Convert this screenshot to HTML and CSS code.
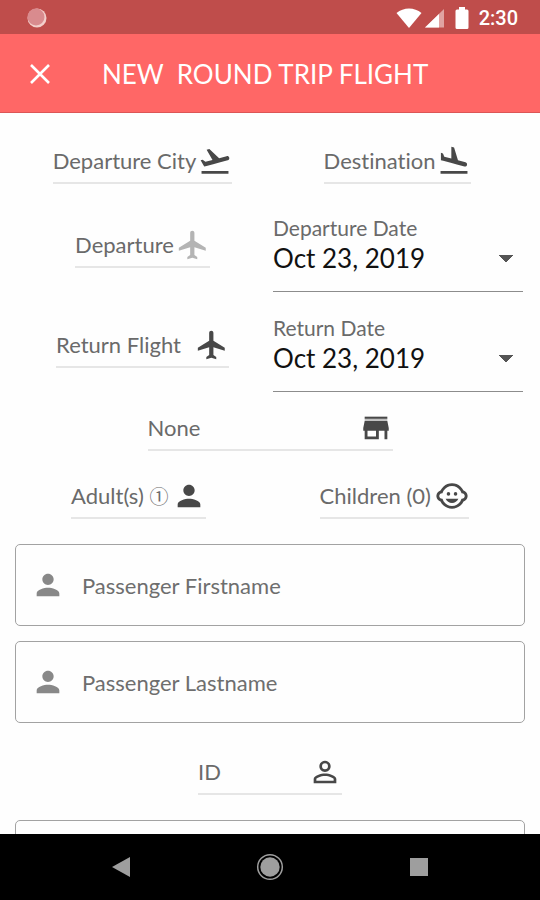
FILE: index.html
```html
<!DOCTYPE html>
<html lang="en">
<head>
<meta charset="utf-8">
<meta name="viewport" content="width=device-width, initial-scale=1">
<title>New Round Trip Flight</title>
<link rel="stylesheet" href="styles.css">
</head>
<body>
<div class="status">
  <svg class="status-dot" viewBox="0 0 20 20" aria-hidden="true"><circle cx="10" cy="10" r="9.500" fill="#f3cfcb"/><circle cx="9" cy="9" r="8.500" fill="#d98b8e"/></svg>
  <div class="status-right">
    <svg class="wifi" viewBox="0 0 26 20" aria-hidden="true"><path d="M13 20 .5 5Q6 .5 13 .5T25.500 5z" fill="#fff"/></svg>
    <svg class="signal" viewBox="0 0 20 20" aria-hidden="true"><path d="M0 19.500 19 1v18.500z" fill="#e0a3a2"/><path d="M0 19.500 14 6v13.500z" fill="#fff"/></svg>
    <svg class="battery" viewBox="0 0 14 22" aria-hidden="true"><path d="M4 0h6v2.500h2q1.500 0 1.500 1.500v16.500q0 1.500-1.500 1.500H2q-1.500 0-1.500-1.500V4q0-1.500 1.500-1.500h2z" fill="#fff"/></svg>
    <span class="time">2:30</span>
  </div>
</div>

<header class="appbar">
  <button class="close" type="button" aria-label="Close">
    <svg viewBox="0 0 20 20" aria-hidden="true"><path d="M1 1 19 19M19 1 1 19" stroke="#fff" stroke-width="2.600" fill="none"/></svg>
  </button>
  <h1>NEW&nbsp; ROUND TRIP FLIGHT</h1>
</header>

<main>
  <form class="form">
    <div class="pair">
      <button class="pick" type="button">Departure City
        <svg class="icon" viewBox="0 0 24 24" aria-hidden="true"><path d="M2.500 19h19v2h-19zM22.070 9.640c-.21-.8-1.040-1.280-1.840-1.060L14.920 10l-6.900-6.430-1.930.51 4.140 7.170-4.970 1.330-1.970-1.540-1.450.39 1.820 3.160.77 1.330 1.600-.43 5.310-1.420 4.350-1.160L21 11.490c.81-.23 1.280-1.050 1.070-1.850z"/></svg>
      </button>
      <button class="pick" type="button">Destination
        <svg class="icon" viewBox="0 0 24 24" aria-hidden="true"><path d="M2.500 19h19v2h-19zM9.680 13.270l4.350 1.160 5.310 1.420c.8.21 1.620-.26 1.840-1.060.21-.8-.26-1.620-1.060-1.840l-5.310-1.420-2.760-9.020L10.120 2v8.280L5.150 8.950l-.93-2.320-1.450-.39v5.170l1.600.43z"/></svg>
      </button>
    </div>

    <div class="pair dated">
      <button class="pick" type="button">Departure
        <svg class="icon faded" viewBox="0 0 24 24" aria-hidden="true"><path d="M21 16v-2l-8-5V3.500c0-.83-.67-1.500-1.500-1.500S10 2.670 10 3.500V9l-8 5v2l8-2.500V19l-2 1.500V22l3.500-1 3.500 1v-1.500L13 19v-5.500z"/></svg>
      </button>
      <div class="date">
        <label for="departure-date">Departure Date</label>
        <select id="departure-date"><option>Oct 23, 2019</option></select>
      </div>
    </div>

    <div class="pair dated">
      <button class="pick wide" type="button">Return Flight
        <svg class="icon" viewBox="0 0 24 24" aria-hidden="true"><path d="M21 16v-2l-8-5V3.500c0-.83-.67-1.500-1.500-1.500S10 2.670 10 3.500V9l-8 5v2l8-2.500V19l-2 1.500V22l3.500-1 3.500 1v-1.500L13 19v-5.500z"/></svg>
      </button>
      <div class="date">
        <label for="return-date">Return Date</label>
        <select id="return-date"><option>Oct 23, 2019</option></select>
      </div>
    </div>

    <button class="pick agency" type="button">None
      <svg class="icon" viewBox="0 0 24 24" aria-hidden="true"><path d="M4 4h16v1.500H4z"/><path d="M4 5.500h16V7H4z" opacity=".35"/><path d="M20 7H4l-1 5v2h1v6h10v-6h4v6h2v-6h1v-2zm-8 11H6v-4h6z"/></svg>
    </button>

    <div class="pair people">
      <button class="pick" type="button"><span>Adult(s) <span class="count">①</span></span>
        <svg class="icon" viewBox="0 0 24 24" aria-hidden="true"><path d="M12 12c2.210 0 4-1.790 4-4s-1.790-4-4-4-4 1.790-4 4 1.790 4 4 4zm0 2c-2.670 0-8 1.340-8 4v2h16v-2c0-2.660-5.330-4-8-4z"/></svg>
      </button>
      <button class="pick" type="button">Children (0)
        <svg class="icon" viewBox="0 0 24 24" aria-hidden="true"><circle cx="14.500" cy="10.500" r="1.250"/><circle cx="9.500" cy="10.500" r="1.250"/><path d="M22.940 12.660c.04-.21.06-.43.06-.66s-.02-.45-.06-.66c-.25-1.510-1.360-2.740-2.810-3.170-.53-1.120-1.280-2.100-2.190-2.910C16.360 3.850 14.280 3 12 3s-4.360.85-5.940 2.260c-.92.81-1.670 1.800-2.190 2.910-1.450.43-2.560 1.650-2.810 3.170-.04.21-.06.43-.06.66s.02.45.06.66c.25 1.510 1.360 2.740 2.810 3.170.52 1.110 1.270 2.090 2.170 2.890C7.620 20.140 9.710 21 12 21s4.380-.86 5.970-2.280c.9-.8 1.650-1.790 2.170-2.890 1.440-.43 2.550-1.650 2.800-3.170zM19 14c-.1 0-.19-.02-.29-.03-.2.670-.49 1.290-.86 1.860C16.600 17.740 14.450 19 12 19s-4.600-1.260-5.850-3.170c-.37-.57-.66-1.190-.86-1.860-.1.010-.19.030-.29.030-1.100 0-2-.9-2-2s.9-2 2-2c.1 0 .19.020.29.030.2-.67.49-1.290.86-1.860C7.400 6.260 9.550 5 12 5s4.600 1.260 5.850 3.170c.37.57.66 1.190.86 1.860.1-.01.19-.03.29-.03 1.100 0 2 .9 2 2s-.9 2-2 2zM7.500 14c.76 1.770 2.490 3 4.500 3s3.740-1.230 4.500-3z"/></svg>
      </button>
    </div>

    <div class="box">
      <svg class="icon" viewBox="0 0 24 24" aria-hidden="true"><path d="M12 12c2.210 0 4-1.790 4-4s-1.790-4-4-4-4 1.790-4 4 1.790 4 4 4zm0 2c-2.670 0-8 1.340-8 4v2h16v-2c0-2.660-5.330-4-8-4z"/></svg>
      <input type="text" placeholder="Passenger Firstname" aria-label="Passenger Firstname">
    </div>
    <div class="box">
      <svg class="icon" viewBox="0 0 24 24" aria-hidden="true"><path d="M12 12c2.210 0 4-1.790 4-4s-1.790-4-4-4-4 1.790-4 4 1.790 4 4 4zm0 2c-2.670 0-8 1.340-8 4v2h16v-2c0-2.660-5.330-4-8-4z"/></svg>
      <input type="text" placeholder="Passenger Lastname" aria-label="Passenger Lastname">
    </div>

    <button class="pick ident" type="button">ID
      <svg class="icon" viewBox="0 0 24 24" aria-hidden="true"><path d="M12 5.900a2.100 2.100 0 1 1 0 4.200 2.100 2.100 0 0 1 0-4.200m0 9c2.970 0 6.100 1.460 6.100 2.100v1.100H5.900V17c0-.64 3.130-2.100 6.100-2.100M12 4C9.790 4 8 5.790 8 8s1.790 4 4 4 4-1.790 4-4-1.790-4-4-4zm0 9c-2.670 0-8 1.340-8 4v3h16v-3c0-2.660-5.330-4-8-4z"/></svg>
    </button>

    <div class="box"><input type="text" aria-label="ID number"></div>
  </form>
</main>

<nav class="navbar">
  <button type="button" aria-label="Back"><svg viewBox="0 0 28 28" aria-hidden="true"><path d="M5 14 23 4v20z" fill="#9e9e9e"/></svg></button>
  <button type="button" aria-label="Home"><svg viewBox="0 0 28 28" aria-hidden="true"><circle cx="14" cy="14" r="12.300" fill="none" stroke="#9e9e9e" stroke-width="1.500"/><circle cx="14" cy="14" r="9.700" fill="#9e9e9e"/></svg></button>
  <button type="button" aria-label="Recent apps"><svg viewBox="0 0 28 28" aria-hidden="true"><path d="M5 5h18v18H5z" fill="#9e9e9e"/></svg></button>
</nav>
</body>
</html>
```

FILE: styles.css
```css
* {
  box-sizing: border-box;
}

body {
  margin: 0;
  height: 100vh;
  display: flex;
  flex-direction: column;
  background: #fefefe;
  color: #6a6a6a;
  font-family: Lato, "Noto Sans", sans-serif;
  font-size: 22px;
  line-height: 28px;
  font-variant-ligatures: none;
}

button,
input,
select {
  margin: 0;
  padding: 0;
  border: 0;
  background: none;
  color: inherit;
  font: inherit;
  font-variant-ligatures: none;
}

svg {
  display: block;
  flex: none;
}

.status {
  flex: none;
  height: 34px;
  padding: 2px 22px 0 27px;
  display: flex;
  align-items: center;
  justify-content: space-between;
  background: #bf4d4b;
}

.status-dot {
  width: 20px;
  height: 20px;
}

.status-right {
  display: flex;
  align-items: center;
}

.wifi {
  width: 26px;
  height: 20px;
}

.signal {
  width: 20px;
  height: 20px;
  margin-left: 3px;
}

.battery {
  width: 14px;
  height: 22px;
  margin: 0 10px;
}

.time {
  color: #fff;
  font-family: Roboto, sans-serif;
  font-size: 20px;
  font-weight: 500;
}

.appbar {
  flex: none;
  height: 79px;
  padding: 2px 0 0 30px;
  display: flex;
  align-items: center;
  gap: 52px;
  background: #ff6766;
  border-bottom: 1px solid #dc5656;
}

.close svg {
  width: 20px;
  height: 20px;
}

h1 {
  margin: 0;
  color: #fff;
  font-size: 26px;
  font-weight: 400;
}

main {
  flex: 1;
  min-height: 0;
  overflow: hidden;
}

.form {
  padding: 25px 15px 0;
  display: flex;
  flex-direction: column;
}

.pair {
  display: grid;
  grid-template-columns: 1fr 1fr;
  justify-items: center;
  align-items: start;
}

.pick {
  height: 46px;
  padding-top: 1px;
  display: flex;
  align-items: center;
  justify-content: space-between;
  gap: 2px;
  border-bottom: 2px solid #e6e6e6;
  white-space: nowrap;
}

.icon {
  width: 34px;
  height: 34px;
  fill: #484848;
}

.faded {
  fill: #b4b4b4;
}

.dated {
  margin-top: 32px;
}

.dated + .dated {
  margin-top: 24px;
}

.dated .pick {
  margin-top: 6px;
}

.wide {
  gap: 14px;
}

.date {
  width: 100%;
  padding: 0 2px 0 3px;
  display: flex;
  flex-direction: column;
}

.date label {
  height: 24px;
  font-size: 21px;
  line-height: 24px;
}

.date select {
  height: 52px;
  padding-bottom: 16px;
  appearance: none;
  border-bottom: 1px solid #8c8c8c;
  background:
    linear-gradient(to bottom left, #555 50%, transparent 51%) right 17px top 15px / 7px 7px no-repeat,
    linear-gradient(to bottom right, #555 50%, transparent 51%) right 10px top 15px / 7px 7px no-repeat;
  color: #111;
  font-size: 26px;
  line-height: 34px;
}

.agency {
  align-self: center;
  width: 245px;
  margin-top: 13px;
}

.people {
  margin: 22px 3px 0 -4px;
}

.people .pick {
  gap: 4px;
}

.count {
  font-family: "Noto Sans CJK JP", sans-serif;
  font-size: 19px;
  line-height: 20px;
}

.box {
  height: 82px;
  margin-top: 15px;
  padding-left: 15px;
  display: flex;
  align-items: center;
  gap: 17px;
  border: 1px solid #a2a2a2;
  border-radius: 5px;
}

.people + .box,
.ident + .box {
  margin-top: 25px;
}

.box .icon {
  fill: #888;
}

.box input {
  flex: 1;
  min-width: 0;
  height: 100%;
}

.box input::placeholder {
  color: #6e6e6e;
  opacity: 1;
}

.ident {
  align-self: center;
  width: 144px;
  margin-top: 26px;
}

.navbar {
  flex: none;
  height: 66px;
  padding: 0 47px;
  display: grid;
  grid-template-columns: repeat(3, 1fr);
  align-items: center;
  justify-items: center;
  background: #000;
}

.navbar svg {
  width: 28px;
  height: 28px;
}
```
